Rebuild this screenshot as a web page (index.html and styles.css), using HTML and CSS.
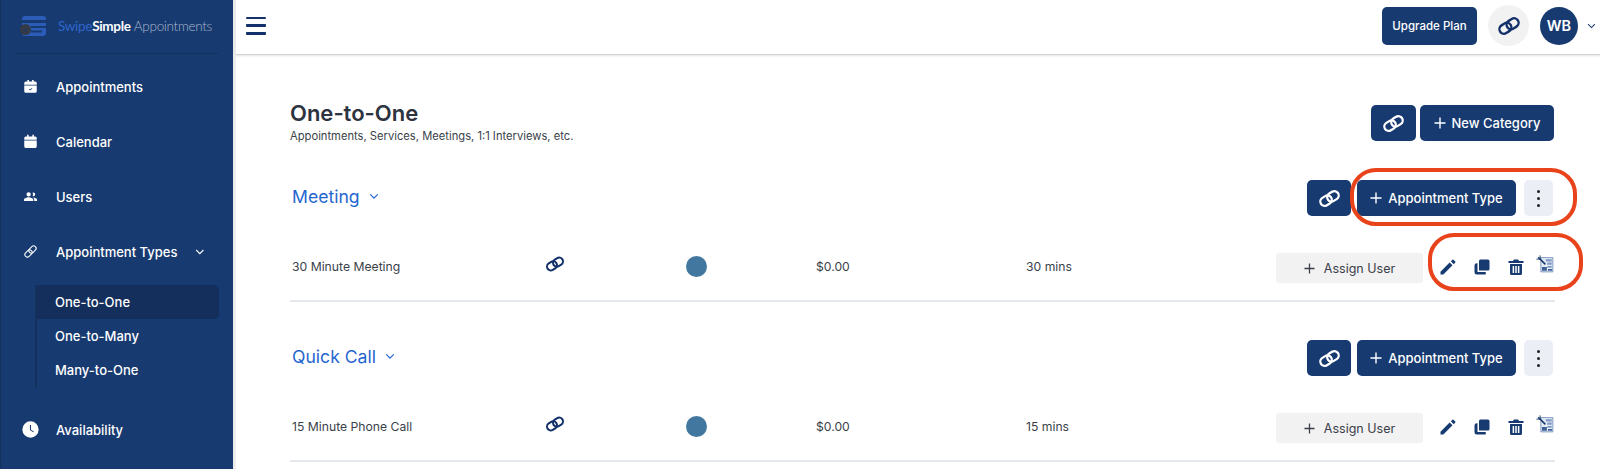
FILE: index.html
```html
<!DOCTYPE html>
<html lang="en">
<head>
    <meta charset="UTF-8">
    <meta name="viewport" content="width=device-width, initial-scale=1.0">
    <title>One-to-One</title>
    <link rel="stylesheet" href="styles.css">
</head>
<body>
    <svg class="icon-defs" width="0" height="0">
        <symbol id="i-chain" viewBox="0 0 24 24">
            <g fill="none" stroke="currentColor" stroke-width="2.400" transform="rotate(-32 12 12)">
                <rect x="1.500" y="7.500" width="12.500" height="9" rx="4.500"/>
                <rect x="10" y="7.500" width="12.500" height="9" rx="4.500"/>
            </g>
        </symbol>
        <symbol id="i-plus" viewBox="0 0 12 12">
            <path d="M6 0.500v11M0.500 6h11" fill="none" stroke="currentColor" stroke-width="1.400"/>
        </symbol>
        <symbol id="i-pencil" viewBox="0 0 24 24">
            <path fill="currentColor" d="M2 18.200V22h3.800L18 9.800 14.200 6 2 18.200zM21.700 6.100a1 1 0 0 0 0-1.410l-2.400-2.400a1 1 0 0 0-1.410 0l-2.100 2.100 3.800 3.800 2.110-2.090z"/>
        </symbol>
        <symbol id="i-copy" viewBox="0 0 24 24">
            <path fill="currentColor" d="M10 2h10a2 2 0 0 1 2 2V14.500a2 2 0 0 1-2 2H8V4a2 2 0 0 1 2-2z"/>
            <path fill="currentColor" d="M6 7v11.500h11V22H5a3 3 0 0 1-3-3V10a3 3 0 0 1 3-3z"/>
        </symbol>
        <symbol id="i-trash" viewBox="0 0 24 24">
            <path fill="currentColor" fill-rule="evenodd" d="M9 2h6l1 2h6v2.500H2V4h6zM4 8h16v12.500a2 2 0 0 1-2 2H6a2 2 0 0 1-2-2zm3.500 2.500v9.500h2v-9.500zm3.500 0v9.500h2v-9.500zm3.500 0v9.500h2v-9.500z"/>
        </symbol>
        <symbol id="i-form" viewBox="0 0 24 24">
            <path fill="#e6ebf4" stroke="#5c7eb0" stroke-width="1" d="M6.500 3.500h16v19h-16z"/>
            <path fill="#7f9ac4" d="M13 5.500h8v3h-8zM15 10h6v3h-6zM15 14.500h6v2.500h-6z"/>
            <path fill="#3f5f96" d="M8 16h6.500v5H8zM16 18.500h5.500V21H16z"/>
            <path fill="none" stroke="#173a70" stroke-width="2.200" d="M3 3l9.500 9.500"/>
            <path fill="none" stroke="#173a70" stroke-width="1.200" d="M.5 5.500h5M5.500 .5v5"/>
        </symbol>
        <symbol id="i-chevron" viewBox="0 0 12 8">
            <path d="M1.500 1.500L6 6l4.500-4.500" fill="none" stroke="currentColor" stroke-width="1.400"/>
        </symbol>
    </svg>

    <aside class="sidebar">
        <div class="brand">
            <svg class="brand-mark" viewBox="0 0 28 20" width="28" height="20">
                <path fill="#2a5cb8" d="M5 0h18a3 3 0 0 1 3 3v1H2V3a3 3 0 0 1 3-3zM2 7h24v10a3 3 0 0 1-3 3H5a3 3 0 0 1-3-3z"/>
                <path fill="#173a70" d="M11 10h15v2H11zM11 14.500h11v2H11z"/>
                <circle cx="5.500" cy="13.500" r="5.500" fill="#343a46"/>
                <path d="M3.300 13.500l1.600 1.600 2.800-2.800" fill="none" stroke="#173a70" stroke-width="1"/>
            </svg>
            <span class="brand-name"><span class="brand-a">Swipe</span><span class="brand-b">Simple</span> <span class="brand-c">Appointments</span></span>
        </div>
        <nav class="nav">
            <a class="nav-item">
                <svg class="nav-icon" viewBox="0 0 24 24"><path fill="#fff" fill-rule="evenodd" d="M7 1.500h2.500V4h5V1.500H17V4h2.500A2.500 2.500 0 0 1 22 6.500V9H2V6.500A2.500 2.500 0 0 1 4.500 4H7zM2 10.500h20v9a2.500 2.500 0 0 1-2.500 2.500h-15A2.500 2.500 0 0 1 2 19.500zm7.500 6l2 2 3.500-3.500-.8-.8-2.700 2.700-1.200-1.200z"/></svg>
                <span>Appointments</span>
            </a>
            <a class="nav-item">
                <svg class="nav-icon" viewBox="0 0 24 24"><path fill="#fff" d="M6.500 1h2.500v3h6V1h2.500v3h2A2.500 2.500 0 0 1 22 6.500V9H2V6.500A2.500 2.500 0 0 1 4.500 4h2zM2 10.500h20v9a3 3 0 0 1-3 3H5a3 3 0 0 1-3-3z"/></svg>
                <span>Calendar</span>
            </a>
            <a class="nav-item">
                <svg class="nav-icon" viewBox="0 0 24 24"><path fill="#fff" d="M9 5a3.500 3.500 0 1 1 0 7 3.500 3.500 0 0 1 0-7zM16.500 5.500a3 3 0 1 1 0 6 3 3 0 0 1-1.200-.3 5 5 0 0 0 0-5.400 3 3 0 0 1 1.200-.3zM1.500 19v-2c0-2.500 5-4 7.500-4s7.500 1.500 7.500 4v2zM18 19v-2c0-1.500-.8-2.700-2-3.600 2.800.1 6.500 1.500 6.500 3.600v2z"/></svg>
                <span>Users</span>
            </a>
            <a class="nav-item">
                <svg class="nav-icon nav-icon-link" viewBox="0 0 24 24">
                    <g fill="none" stroke="#fff" stroke-width="1.700" transform="rotate(-45 12 12)">
                        <rect x="1" y="8" width="13" height="8" rx="4"/>
                        <rect x="10" y="8" width="13" height="8" rx="4"/>
                    </g>
                </svg>
                <span class="nav-grow">Appointment Types</span>
                <svg class="nav-chevron"><use href="#i-chevron"/></svg>
            </a>
            <div class="subnav">
                <a class="sub-item sub-active">One-to-One</a>
                <a class="sub-item">One-to-Many</a>
                <a class="sub-item">Many-to-One</a>
            </div>
            <a class="nav-item nav-last">
                <svg class="nav-icon nav-icon-clock" viewBox="0 0 24 24"><path fill="#fff" fill-rule="evenodd" d="M12 .5a11.500 11.500 0 1 1 0 23 11.500 11.500 0 0 1 0-23zM11.200 5.500v7.300l4.800 3 .7-1.100-4-2.500V5.500z"/></svg>
                <span>Availability</span>
            </a>
        </nav>
    </aside>

    <div class="page">
        <header class="topbar">
            <button class="burger"><span></span><span></span><span></span></button>
            <div class="topbar-right">
                <button class="btn btn-upgrade">Upgrade Plan</button>
                <span class="round-link"><svg class="chain-top"><use href="#i-chain"/></svg></span>
                <span class="avatar">WB</span>
                <svg class="avatar-chevron"><use href="#i-chevron"/></svg>
            </div>
        </header>

        <main class="content">
            <div class="heading">
                <div>
                    <h1>One-to-One</h1>
                    <p>Appointments, Services, Meetings, 1:1 Interviews, etc.</p>
                </div>
                <div class="actions">
                    <button class="btn btn-icon"><svg class="chain"><use href="#i-chain"/></svg></button>
                    <button class="btn btn-wide"><svg class="plus"><use href="#i-plus"/></svg>New Category</button>
                </div>
            </div>

            <section class="group">
                <div class="group-head">
                    <h2>Meeting <svg class="group-chevron"><use href="#i-chevron"/></svg></h2>
                    <div class="actions actions-group">
                        <button class="btn btn-icon"><svg class="chain"><use href="#i-chain"/></svg></button>
                        <button class="btn btn-type"><svg class="plus"><use href="#i-plus"/></svg>Appointment Type</button>
                        <button class="btn-more"><span></span><span></span><span></span></button>
                    </div>
                </div>
                <div class="row">
                    <span>30 Minute Meeting</span>
                    <svg class="row-link"><use href="#i-chain"/></svg>
                    <span class="dot"></span>
                    <span>$0.00</span>
                    <span>30 mins</span>
                    <button class="btn-assign"><svg class="plus"><use href="#i-plus"/></svg>Assign User</button>
                    <div class="tools">
                        <svg class="tool"><use href="#i-pencil"/></svg>
                        <svg class="tool"><use href="#i-copy"/></svg>
                        <svg class="tool"><use href="#i-trash"/></svg>
                        <svg class="tool tool-form"><use href="#i-form"/></svg>
                    </div>
                </div>
            </section>

            <section class="group">
                <div class="group-head">
                    <h2>Quick Call <svg class="group-chevron"><use href="#i-chevron"/></svg></h2>
                    <div class="actions actions-group">
                        <button class="btn btn-icon"><svg class="chain"><use href="#i-chain"/></svg></button>
                        <button class="btn btn-type"><svg class="plus"><use href="#i-plus"/></svg>Appointment Type</button>
                        <button class="btn-more"><span></span><span></span><span></span></button>
                    </div>
                </div>
                <div class="row">
                    <span>15 Minute Phone Call</span>
                    <svg class="row-link"><use href="#i-chain"/></svg>
                    <span class="dot"></span>
                    <span>$0.00</span>
                    <span>15 mins</span>
                    <button class="btn-assign"><svg class="plus"><use href="#i-plus"/></svg>Assign User</button>
                    <div class="tools">
                        <svg class="tool"><use href="#i-pencil"/></svg>
                        <svg class="tool"><use href="#i-copy"/></svg>
                        <svg class="tool"><use href="#i-trash"/></svg>
                        <svg class="tool tool-form"><use href="#i-form"/></svg>
                    </div>
                </div>
            </section>
        </main>
    </div>

    <!-- annotations drawn over the screenshot -->
    <div class="ring ring-top"></div>
    <div class="ring ring-tools"></div>
</body>
</html>
```

FILE: styles.css
```css
* {
    box-sizing: border-box;
}
html, body {
    height: 469px;
    overflow: hidden;
}
body {
    margin: 0;
    display: flex;
    font-family: "Inter", "Liberation Sans", sans-serif;
    color: #3a3f4a;
    background: #fff;
}
button {
    font-family: inherit;
    border: none;
    cursor: pointer;
}
.icon-defs {
    position: absolute;
}

/* sidebar */
.sidebar {
    width: 233px;
    flex-shrink: 0;
    background: #173a70;
    border-left: 1px solid #14305c;
    margin-right: 3px;
    box-shadow: 3px 0 0 #ececec;
    padding: 0 15px;
}
.brand {
    display: flex;
    align-items: center;
    height: 54px;
    padding: 0 5px 2px 4px;
    border-bottom: 1px solid #14305c;
    gap: 10px;
}
.brand-mark {
    flex-shrink: 0;
}
.brand-name {
    font-family: "Lato", sans-serif;
    font-size: 13.500px;
    letter-spacing: -0.3px;
    white-space: nowrap;
}
.brand-a {
    color: #2f66cc;
}
.brand-b {
    color: #fff;
    font-weight: 700;
}
.brand-c {
    color: #a9b6cb;
    font-weight: 300;
}
.nav {
    display: flex;
    flex-direction: column;
}
.nav-item {
    display: flex;
    align-items: center;
    height: 55px;
    color: #fff;
    font-size: 13px;
    font-weight: 500;
    padding-left: 7px;
    gap: 18px;
    white-space: nowrap;
}
.nav-item:first-child {
    margin-top: 5px;
}
.nav-icon {
    width: 15px;
    height: 15px;
    flex-shrink: 0;
}
.nav-icon-clock {
    width: 17px;
    height: 17px;
    margin: 0 -1px;
}
.nav-grow {
    flex-grow: 1;
}
.nav-chevron {
    width: 11px;
    height: 8px;
    margin-right: 13px;
    color: #fff;
}
.subnav {
    margin-left: 19px;
    border-left: 2px solid #14305c;
    margin-top: 6px;
    width: 184px;
    display: flex;
    flex-direction: column;
}
.sub-item {
    height: 34px;
    line-height: 34px;
    padding-left: 18px;
    color: #fff;
    font-size: 13px;
    font-weight: 500;
}
.sub-active {
    background: #142f5c;
    border-radius: 0 5px 5px 0;
}
.nav-last {
    margin-top: 15px;
}

/* top bar */
.page {
    flex-grow: 1;
    min-width: 0;
    display: flex;
    flex-direction: column;
}
.topbar {
    height: 55px;
    flex-shrink: 0;
    display: flex;
    align-items: center;
    justify-content: space-between;
    border-bottom: 1px solid #d2d2d2;
    box-shadow: 0 1px 2px #e4e4e4;
    padding: 0 4px 3px 10px;
}
.burger {
    width: 20px;
    height: 18px;
    background: none;
    padding: 0;
    display: flex;
    flex-direction: column;
    justify-content: space-between;
}
.burger span {
    display: block;
    height: 2.500px;
    border-radius: 1px;
    background: #12306a;
}
.topbar-right {
    display: flex;
    align-items: center;
}
.btn {
    background: #173a70;
    color: #fff;
    border-radius: 5px;
    font-weight: 500;
    display: flex;
    align-items: center;
    justify-content: center;
}
.btn-upgrade {
    width: 95px;
    height: 38px;
    font-size: 11.500px;
    margin-right: 11px;
}
.round-link {
    width: 41px;
    height: 41px;
    border-radius: 50%;
    background: #f2f2f2;
    color: #12306a;
    display: flex;
    align-items: center;
    justify-content: center;
    margin-right: 11px;
}
.chain-top {
    width: 24px;
    height: 24px;
}
.avatar {
    width: 38px;
    height: 38px;
    border-radius: 50%;
    background: #173a70;
    color: #fff;
    font-size: 14.500px;
    font-weight: 600;
    display: flex;
    align-items: center;
    justify-content: center;
    margin-right: 9px;
}
.avatar-chevron {
    width: 9px;
    height: 6px;
    color: #173a70;
}

/* content */
.content {
    padding: 43px 45px 0 54px;
}
.heading {
    display: flex;
    justify-content: space-between;
    align-items: flex-start;
    height: 76px;
    margin-top: 6px;
}
h1 {
    margin: -4px 0 0;
    font-size: 22px;
    line-height: 26px;
    font-weight: 600;
    color: #2d3340;
}
.heading p {
    margin: 3px 0 0;
    font-size: 11.200px;
    line-height: 14px;
    color: #3a3f4a;
}
.actions {
    display: flex;
    gap: 4px;
    margin-top: 1px;
    margin-right: 1px;
}
.btn-icon {
    width: 45px;
    height: 36px;
    padding: 0;
}
.chain {
    width: 23px;
    height: 23px;
}
.plus {
    width: 12px;
    height: 12px;
    margin-right: 6px;
    flex-shrink: 0;
}
.btn-wide {
    width: 134px;
    height: 36px;
    font-size: 13px;
}
.group-head {
    display: flex;
    justify-content: space-between;
    align-items: center;
    height: 36px;
}
h2 {
    margin: -3px 0 0 2px;
    font-size: 17.600px;
    font-weight: 400;
    color: #1f66d0;
    display: flex;
    align-items: center;
    gap: 9px;
}
.group-chevron {
    width: 10px;
    height: 7px;
    color: #1f66d0;
}
.actions-group {
    gap: 0;
    margin-top: 0;
    margin-right: 2px;
}
.actions-group .btn-icon {
    width: 44px;
}
.btn-type {
    width: 159px;
    height: 36px;
    font-size: 13px;
    margin: 0 8px 0 6px;
}
.btn-more {
    width: 29px;
    height: 36px;
    padding: 0;
    border-radius: 5px;
    background: #ebeef5;
    display: flex;
    flex-direction: column;
    align-items: center;
    justify-content: center;
    gap: 4px;
}
.btn-more span {
    width: 3px;
    height: 3px;
    border-radius: 50%;
    background: #222;
}
.row {
    display: grid;
    grid-template-columns: 253px 141px 130px 210px 250px 163px auto;
    align-items: center;
    height: 86px;
    border-bottom: 2px solid #e4e8ee;
    margin-bottom: 38px;
    padding-left: 2px;
    padding-top: 17px;
    font-size: 12.200px;
    color: #3a3f4a;
}
.row-link {
    width: 20px;
    height: 20px;
    color: #12306a;
    margin-top: -5px;
}
.dot {
    width: 21px;
    height: 21px;
    border-radius: 50%;
    background: #42789f;
}
.btn-assign {
    width: 147px;
    height: 30px;
    margin-top: 3px;
    border-radius: 3px;
    background: #f2f2f2;
    color: #3a3f4a;
    font-size: 12.500px;
    display: flex;
    align-items: center;
    justify-content: center;
}
.btn-assign .plus {
    width: 11px;
    height: 11px;
    margin-right: 9px;
}
.tools {
    display: flex;
}
.tool {
    width: 18px;
    height: 18px;
    color: #173a70;
    margin-right: 16px;
    flex-shrink: 0;
}
.tool-form {
    margin: -3px 0 0 -5px;
}

/* red annotation rings */
.ring {
    position: absolute;
    border: 4px solid #e8431a;
    border-radius: 26px;
}
.ring-top {
    left: 1350px;
    top: 168px;
    width: 227px;
    height: 58px;
}
.ring-tools {
    left: 1428px;
    top: 233px;
    width: 155px;
    height: 58px;
}
```
